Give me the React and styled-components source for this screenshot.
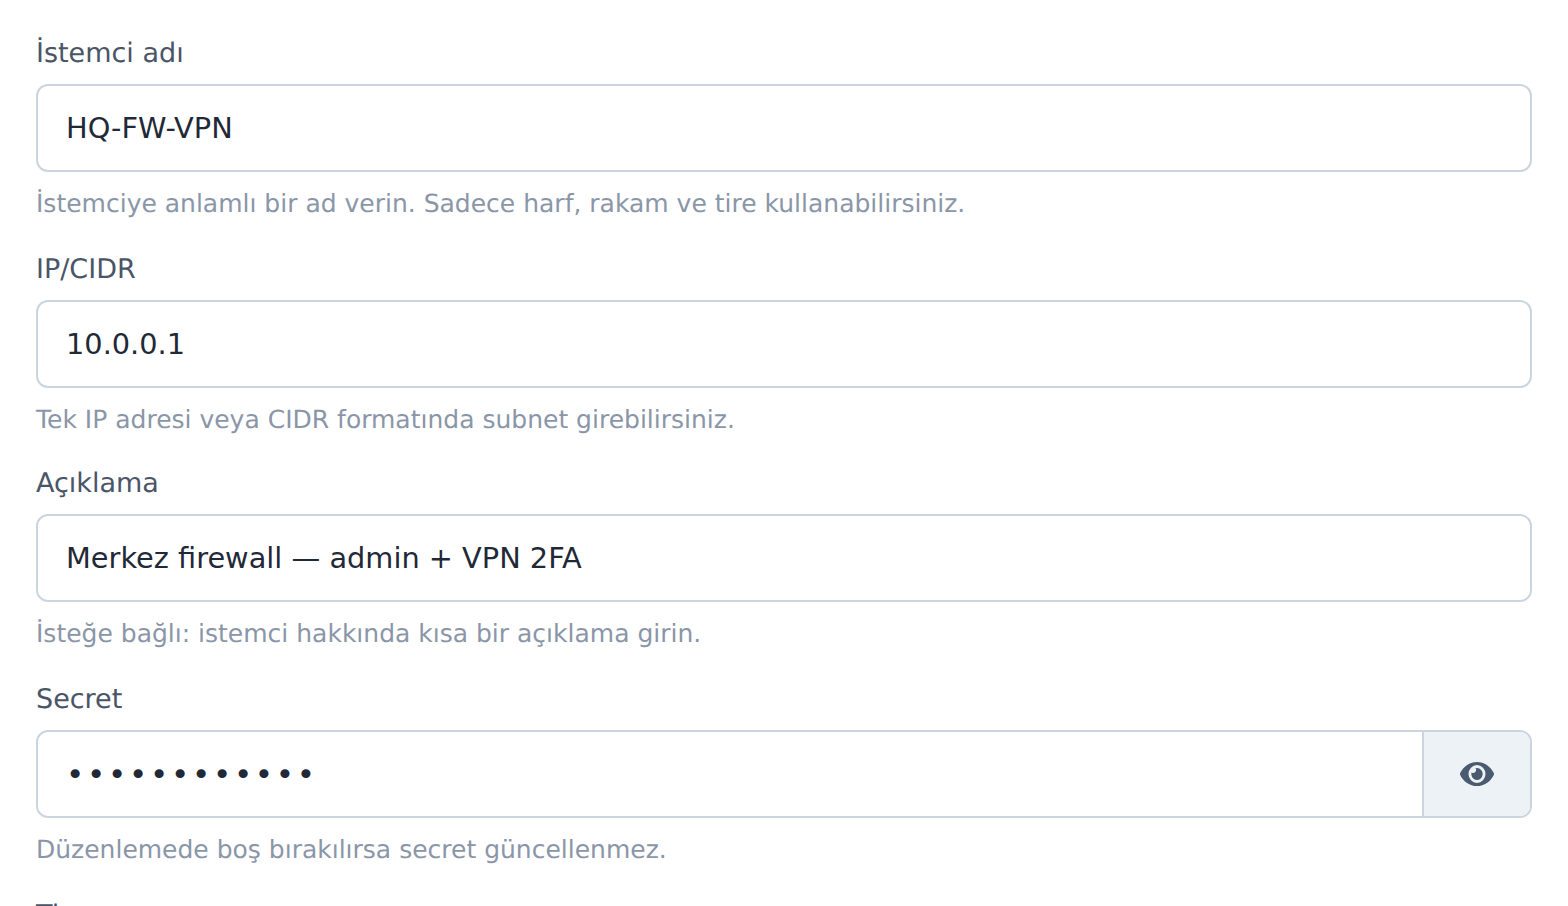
import React from "react";
import styled, { createGlobalStyle } from "styled-components";

const Global = createGlobalStyle`
  html, body { margin: 0; padding: 0; background: #fff; height: 100%; overflow: hidden; }
  body { font-family: "DejaVu Sans", sans-serif; text-rendering: geometricPrecision; }
`;

const Form = styled.form`
  display: flex;
  flex-direction: column;
  gap: 32px;
  padding: 36px 36px 0;
`;

const Field = styled.div`
  display: flex;
  flex-direction: column;
  margin-top: ${(p) => (p.$tight ? "-2px" : "0")};
`;

const Label = styled.label`
  font-size: 27px;
  line-height: 36px;
  color: #4a5568;
  margin-bottom: 12px;
`;

const InputGroup = styled.div`
  display: flex;
  height: 88px;
  box-sizing: border-box;
  border: 2px solid #cbd5e0;
  border-radius: 12px;
  overflow: hidden;
  background: #fff;
`;

const Input = styled.input`
  flex: 1;
  min-width: 0;
  border: 0;
  outline: 0;
  padding: 0 28px;
  background: transparent;
  font-family: inherit;
  font-size: ${(p) => (p.type === "password" ? "31px" : "28.8px")};
  color: #1f2937;
  letter-spacing: ${(p) => (p.type === "password" ? "2.7px" : "normal")};
`;

const Toggle = styled.button`
  width: 108px;
  flex: none;
  display: flex;
  align-items: center;
  justify-content: center;
  padding: 0;
  border: 0;
  border-left: 2px solid #cbd5e0;
  background: #edf2f7;
  color: #4a5a70;
`;

const EyeIcon = styled.svg`
  display: block;
  width: 34px;
  height: 24px;
  fill: currentColor;
`;

const Hint = styled.p`
  margin: 16px 0 0;
  font-size: 25px;
  line-height: 32px;
  color: #8a96a8;
`;

const fields = [
  { label: "İstemci adı", value: "HQ-FW-VPN", hint: "İstemciye anlamlı bir ad verin. Sadece harf, rakam ve tire kullanabilirsiniz." },
  { label: "IP/CIDR", value: "10.0.0.1", hint: "Tek IP adresi veya CIDR formatında subnet girebilirsiniz." },
  { label: "Açıklama", value: "Merkez firewall — admin + VPN 2FA", hint: "İsteğe bağlı: istemci hakkında kısa bir açıklama girin.", tight: true },
  { label: "Secret", value: "abcdefghijkl", hint: "Düzenlemede boş bırakılırsa secret güncellenmez.", secret: true },
];

export default function App() {
  return (
    <>
      <Global />
      <Form>
        {fields.map((f) => (
          <Field key={f.label} $tight={f.tight}>
            <Label>{f.label}</Label>
            <InputGroup>
              <Input type={f.secret ? "password" : "text"} defaultValue={f.value} />
              {f.secret && (
                <Toggle type="button" aria-label="Göster">
                  <EyeIcon viewBox="0 64 576 384" preserveAspectRatio="none">
                    <path d="M572.52 241.4C518.29 135.59 410.93 64 288 64S57.68 135.64 3.48 241.41a32.35 32.35 0 0 0 0 29.19C57.71 376.41 165.07 448 288 448s230.32-71.64 284.52-177.41a32.35 32.35 0 0 0 0-29.19zM288 400a144 144 0 1 1 144-144 143.93 143.93 0 0 1-144 144zm0-240a95.31 95.31 0 0 0-25.31 3.79 47.85 47.85 0 0 1-66.9 66.9A95.78 95.78 0 1 0 288 160z" />
                  </EyeIcon>
                </Toggle>
              )}
            </InputGroup>
            <Hint>{f.hint}</Hint>
          </Field>
        ))}
        <Field>
          <Label>Tip</Label>
        </Field>
      </Form>
    </>
  );
}
